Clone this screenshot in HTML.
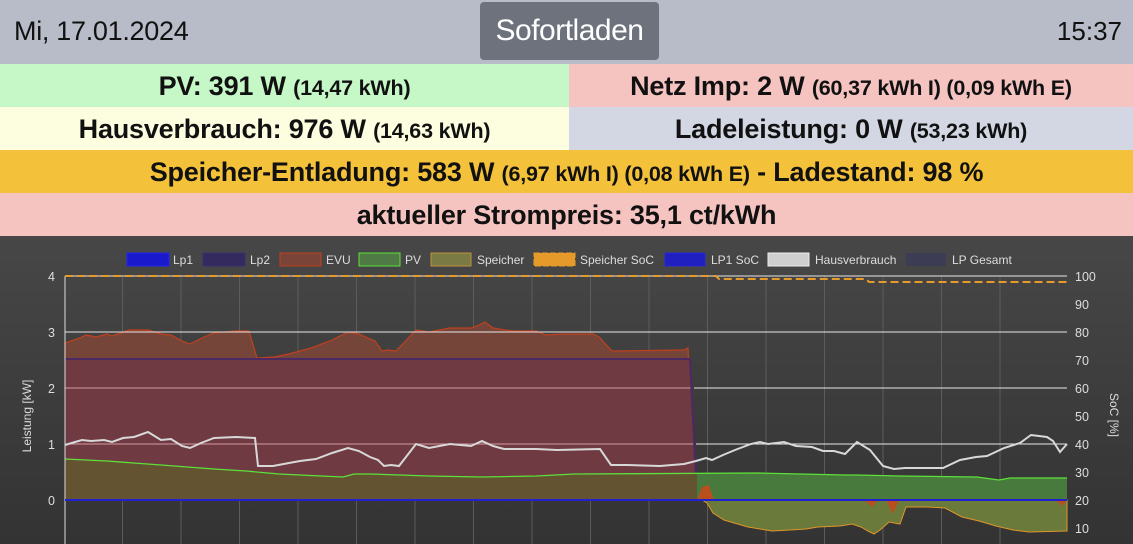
<!DOCTYPE html>
<html><head><meta charset="utf-8"><style>
*{margin:0;padding:0;box-sizing:border-box}
html,body{width:1133px;height:544px;overflow:hidden}
body{font-family:"Liberation Sans",sans-serif;background:#333;position:relative}
.hdr{position:relative;height:64px;background:#b8bcc8}
.date{position:absolute;left:14px;top:16px;font-size:27px;color:#111;letter-spacing:-0.3px}
.btn{position:absolute;left:480px;top:2px;width:179px;height:58px;background:#6e727d;border-radius:4px;color:#fff;font-size:30px;text-align:center;line-height:58px;letter-spacing:-0.5px}
.time{position:absolute;right:11px;top:16px;font-size:26px;color:#111}
.row{display:flex;height:43px}
.c{flex:none;text-align:center;line-height:45px;font-weight:bold;font-size:27px;color:#111;white-space:nowrap;letter-spacing:-0.2px}
.c small{font-size:21.5px}
.chart{position:absolute;left:0;top:236px;width:1133px;height:308px;background:linear-gradient(#474747,#333)}
</style></head><body>
<div class="hdr"><div class="date">Mi, 17.01.2024</div><div class="btn">Sofortladen</div><div class="time">15:37</div></div>
<div class="row"><div class="c" style="width:569px;background:#c6f7c6">PV: 391 W <small>(14,47 kWh)</small></div><div class="c" style="width:564px;background:#f5c4c1">Netz Imp: 2 W <small>(60,37 kWh I) (0,09 kWh E)</small></div></div>
<div class="row"><div class="c" style="width:569px;background:#fdfde0">Hausverbrauch: 976 W <small>(14,63 kWh)</small></div><div class="c" style="width:564px;background:#d2d7e3">Ladeleistung: 0 W <small>(53,23 kWh)</small></div></div>
<div class="row"><div class="c" style="width:1133px;background:#f4c23a">Speicher-Entladung: 583 W <small>(6,97 kWh I) (0,08 kWh E)</small> - Ladestand: 98 %</div></div>
<div class="row"><div class="c" style="width:1133px;background:#f5c4c1">aktueller Strompreis: 35,1 ct/kWh</div></div>
<div class="chart">
<svg width="1133" height="308" viewBox="0 236 1133 308" font-family="Liberation Sans, sans-serif">
<g stroke="#5c5c5c" stroke-width="1">
<line x1="122.5" y1="276" x2="122.5" y2="544"/><line x1="181" y1="276" x2="181" y2="544"/><line x1="239.5" y1="276" x2="239.5" y2="544"/><line x1="298" y1="276" x2="298" y2="544"/><line x1="356.5" y1="276" x2="356.5" y2="544"/><line x1="415" y1="276" x2="415" y2="544"/><line x1="473.5" y1="276" x2="473.5" y2="544"/><line x1="532" y1="276" x2="532" y2="544"/><line x1="590.5" y1="276" x2="590.5" y2="544"/><line x1="649" y1="276" x2="649" y2="544"/><line x1="707.5" y1="276" x2="707.5" y2="544"/><line x1="766" y1="276" x2="766" y2="544"/><line x1="824.5" y1="276" x2="824.5" y2="544"/><line x1="883" y1="276" x2="883" y2="544"/><line x1="941.5" y1="276" x2="941.5" y2="544"/><line x1="1000" y1="276" x2="1000" y2="544"/>
</g>
<path d="M65,343 L80,338 86,335 96,337 107,334 112,336 129,330 148,330 161,334 171,335 182,341 190,344 204,337 214,333 236,331 249,331 257,358 274,357 289,354 300,351 311,348 332,340 348,332 359,334 370,339 375,341 382,351 388,350 396,351 416,330 429,332 450,328 471,328 479,325 485,322 493,328 504,330 514,331 536,331 546,335 562,334 593,334 599,337 612,351 684,350 688,348 694,500 L697,500 690,359 65,359 Z" fill="#76453a" stroke="#c0401e" stroke-width="1.2"/>
<path d="M65,359 L690,359 697,500 65,500 Z" fill="#6f3a42"/>
<line x1="65" y1="388" x2="692" y2="388" stroke="#d49aa4" stroke-width="1"/>
<line x1="65" y1="444" x2="694" y2="444" stroke="#d49aa4" stroke-width="1"/>
<polyline points="65,359 690,359 697,500" fill="none" stroke="#4b2a63" stroke-width="2"/>
<path d="M65,459 L107,461 161,465 214,469 246,471 279,474 321,476 343,477 354,474 370,474 429,476 482,477 536,476 575,474 697,473 L697,500 65,500 Z" fill="#635331"/>
<path d="M697,473 L757,473 845,475 856,475 900,476 977,477 999,480 1010,478 1042,478 1067,478 L1067,500 697,500 Z" fill="#487a3d"/>
<polyline points="65,459 107,461 161,465 214,469 246,471 279,474 321,476 343,477 354,474 370,474 429,476 482,477 536,476 575,474 757,473 845,475 856,475 900,476 977,477 999,480 1010,478 1042,478 1067,478" fill="none" stroke="#5de03a" stroke-width="1.3"/>
<path d="M697,500 L702,500 707,503 713,513 724,520 748,527 772,531 790,530 806,529 818,527 840,526 852,524 861,527 868,531 874,534 880,530 889,522 900,524 906,507 928,507 945,508 962,517 979,521 996,526 1013,530 1029,532 1067,531 L1067,500 Z" fill="#6a7a3a" stroke="#e0962a" stroke-width="1"/>
<path d="M697,500 L702,487 709,485 714,500 Z M864,500 L872,507 878,500 Z M886,500 L893,514 899,500 Z M1056,500 L1062,506 1067,500 Z" fill="#b8501e"/>
<g stroke="#e8e8e8" stroke-width="1"><line x1="65" y1="276" x2="1067" y2="276"/><line x1="65" y1="332" x2="1067" y2="332"/><line x1="694" y1="388" x2="1067" y2="388"/><line x1="696" y1="444" x2="1067" y2="444"/></g>
<line x1="65" y1="276" x2="65" y2="544" stroke="#ddd" stroke-width="1"/>
<polyline points="65,445 75,442 82,440 91,441 104,440 112,442 123,438 134,437 148,432 161,440 171,439 182,446 190,448 201,443 214,438 236,437 255,438 258,466 273,466 289,463 300,461 316,459 332,453 348,448 359,451 370,457 378,460 384,466 391,465 399,466 416,444 429,448 450,444 471,446 482,441 493,446 504,449 536,449 557,450 600,449 611,465 627,465 660,466 684,464 696,461 706,458 712,460 723,455 735,450 751,444 760,442 768,444 784,442 796,446 812,447 823,451 834,451 845,454 857,442 870,450 883,466 894,469 905,468 943,468 960,460 976,457 987,456 1004,448 1020,443 1031,435 1047,437 1053,441 1060,452 1067,444" fill="none" stroke="#d8d8d8" stroke-width="2"/>
<line x1="65" y1="500" x2="1067" y2="500" stroke="#2020d0" stroke-width="2"/>
<polyline points="65,276 716,276 719,279 866,279 869,282 1067,282" fill="none" stroke="#e59a2a" stroke-width="2" stroke-dasharray="8,4"/>
<g fill="#ddd" font-size="12.5"><text x="55" y="281" text-anchor="end">4</text><text x="55" y="337" text-anchor="end">3</text><text x="55" y="393" text-anchor="end">2</text><text x="55" y="449" text-anchor="end">1</text><text x="55" y="505" text-anchor="end">0</text>
<text x="1075" y="281">100</text><text x="1075" y="309">90</text><text x="1075" y="337">80</text><text x="1075" y="365">70</text><text x="1075" y="393">60</text><text x="1075" y="421">50</text><text x="1075" y="449">40</text><text x="1075" y="477">30</text><text x="1075" y="505">20</text><text x="1075" y="533">10</text></g>
<text transform="translate(31,416) rotate(-90)" fill="#ddd" font-size="12" text-anchor="middle">Leistung [kW]</text>
<text transform="translate(1110,415) rotate(90)" fill="#ddd" font-size="12" text-anchor="middle">SoC [%]</text>
<g font-size="12" fill="#ddd">
<rect x="127" y="253" width="42" height="13" fill="#1a1acc" stroke="#2222ee"/><text x="173" y="264">Lp1</text>
<rect x="203" y="253" width="42" height="13" fill="#352a5e" stroke="#3a2f70"/><text x="250" y="264">Lp2</text>
<rect x="280" y="253" width="41" height="13" fill="#7a4538" stroke="#c0401e"/><text x="326" y="264">EVU</text>
<rect x="359" y="253" width="41" height="13" fill="#4f7a45" stroke="#5de03a"/><text x="405" y="264">PV</text>
<rect x="431" y="253" width="40" height="13" fill="#7a7a45" stroke="#c09040"/><text x="477" y="264">Speicher</text>
<rect x="534" y="253" width="41" height="13" fill="#e59a2a" stroke="#e59a2a" stroke-dasharray="6,2"/><text x="580" y="264">Speicher SoC</text>
<rect x="665" y="253" width="40" height="13" fill="#2020c0" stroke="#2222ee" stroke-dasharray="6,2"/><text x="711" y="264">LP1 SoC</text>
<rect x="768" y="253" width="41" height="13" fill="#cfcfcf" stroke="#eee"/><text x="815" y="264">Hausverbrauch</text>
<rect x="906" y="253" width="40" height="13" fill="#3c3c55"/><text x="952" y="264">LP Gesamt</text>
</g>
</svg>
</div>
</body></html>
